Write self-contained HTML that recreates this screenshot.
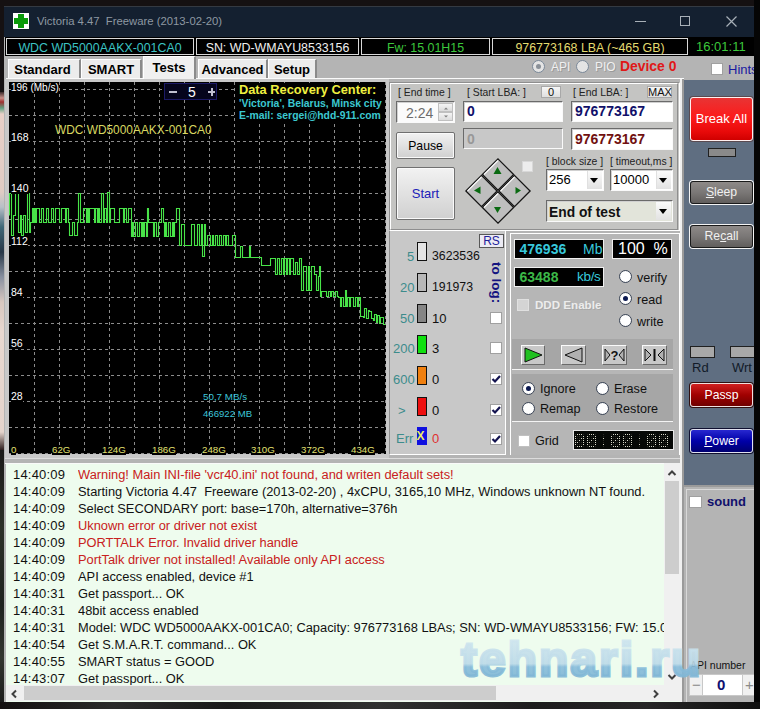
<!DOCTYPE html>
<html><head><meta charset="utf-8">
<style>
*{margin:0;padding:0;box-sizing:border-box}
html,body{width:760px;height:709px;overflow:hidden;background:#151112;font-family:"Liberation Sans",sans-serif;}
.a{position:absolute}
.t{position:absolute;white-space:nowrap;line-height:1}
.win{left:4px;top:6px;width:751px;height:696px;background:#b4b4b4;}
.title{left:4px;top:6px;width:750px;height:31px;background:#142030;border-top:1px solid #343a42}
.info{left:5px;top:37px;width:749px;height:19px;background:#000;}
.ibox{position:absolute;top:38px;height:17px;border:1px solid #d8d8d8;background:#000;font-size:12.4px;line-height:17px;padding-top:1px;text-align:center;}
.tab{position:absolute;top:59px;height:19px;background:#ececec;border-left:1px solid #fff;border-top:1px solid #fff;border-right:2px solid #8a8a8a;font-weight:bold;font-size:13px;line-height:19px;text-align:center;color:#000;}
.grp{position:absolute;border:1px solid #f4f4f4;box-shadow:inset 1px 1px 0 #8c8c8c, -1px -1px 0 #8c8c8c;}
.lbl{position:absolute;font-size:10.4px;color:#222;white-space:nowrap;line-height:1;margin-top:1px}
.edit{position:absolute;background:#fff;border-top:1px solid #6a6a6a;border-left:1px solid #6a6a6a;border-right:1px solid #fafafa;border-bottom:1px solid #fafafa;box-shadow:inset 1px 1px 0 #d0d0d0;}
.btn{position:absolute;background:linear-gradient(#f2f2f2,#d0d0d0);border:1px solid #707070;border-radius:2px;text-align:center;font-size:13px;color:#000;box-shadow:inset 0 0 0 1px #fafafa;}
.cb{position:absolute;width:12px;height:12px;background:#fff;border:1px solid #a0a0a0;}
.rb{position:absolute;width:13px;height:13px;border-radius:50%;background:radial-gradient(circle at 50% 50%,#fff 55%,#e4e4e4 100%);border:1.5px solid #3c4658;}
.rb.on::after{content:"";position:absolute;left:3px;top:3px;width:5px;height:5px;border-radius:50%;background:#0a1850;}
.log{font-size:13px;line-height:17px;white-space:nowrap;}
</style></head><body>
<!-- desktop bits -->
<div class="a" style="left:0;top:92px;width:5px;height:358px;background:linear-gradient(#3a2a2a 0px,#c89088 6px,#a03030 10px,#60a080 16px,#e8d0c8 22px,#e0ccc4 100px,#b8c0c8 115px,#406878 135px,#283848 160px,#8890a0 185px,#d8c8c0 210px,#e8d8d0 240px,#e4d4cc 340px,#302020 358px)"></div>

<div class="a" style="left:0;top:450px;width:4px;height:259px;background:linear-gradient(#1a1a18,#2c3028 30%,#1e221e 60%,#333630 80%,#181818)"></div>
<div class="a win"></div>
<div class="a title"></div>
<!-- icon -->
<div class="a" style="left:13px;top:13px;width:16px;height:16px;background:#fff"></div>
<div class="a" style="left:18px;top:14px;width:6px;height:14px;background:#0a9a0a"></div>
<div class="a" style="left:14px;top:18px;width:14px;height:6px;background:#0a9a0a"></div>
<div class="t" style="left:37px;top:16px;font-size:11.3px;color:#8e98a2">Victoria 4.47&nbsp; Freeware (2013-02-20)</div>
<!-- window controls -->
<div class="a" style="left:635px;top:21px;width:11px;height:1px;background:#a8b0b8"></div>
<div class="a" style="left:680px;top:16px;width:10px;height:10px;border:1px solid #a8b0b8"></div>
<svg class="a" style="left:726px;top:16px" width="11" height="11"><path d="M0.5 0.5L10.5 10.5M10.5 0.5L0.5 10.5" stroke="#a8b0b8" stroke-width="1.2"/></svg>

<!-- info strip -->
<div class="a info"></div>
<div class="ibox" style="left:6px;width:188px;color:#3cc4c4">WDC WD5000AAKX-001CA0</div>
<div class="ibox" style="left:196px;width:163px;color:#f0f0f0">SN: WD-WMAYU8533156</div>
<div class="ibox" style="left:361px;width:129px;color:#3cc83c">Fw: 15.01H15</div>
<div class="ibox" style="left:492px;width:196px;color:#e4dc70">976773168 LBA (~465 GB)</div>
<div class="t" style="left:696px;top:40px;font-size:13px;color:#3cc83c">16:01:11</div>

<!-- tabs -->
<div class="a" style="left:5px;top:56px;width:680px;height:3px;background:#b4b4b4"></div>
<div class="tab" style="left:8px;width:73px;padding-right:3px">Standard</div>
<div class="tab" style="left:81px;width:61px">SMART</div>
<div class="tab" style="left:143px;top:56px;height:24px;width:53px;background:#f0f0f0;line-height:22px">Tests</div>
<div class="tab" style="left:198px;width:70px">Advanced</div>
<div class="tab" style="left:268px;width:49px">Setup</div>
<div class="a" style="left:6px;top:78px;width:137px;height:1px;background:#fafafa"></div>
<div class="a" style="left:196px;top:78px;width:488px;height:1px;background:#fafafa"></div>

<!-- API/PIO/Device -->
<div class="rb" style="left:532px;top:60px;background:#e4e4e4;border-color:#7a8898"><div class="a" style="left:3px;top:3px;width:5px;height:5px;border-radius:50%;background:#8a9098"></div></div>
<div class="t" style="left:551px;top:61px;font-size:12px;color:#f0f0f0;text-shadow:1px 1px 0 #9a9a9a">API</div>
<div class="rb" style="left:576px;top:60px;background:#e4e4e4;border-color:#7a8898"></div>
<div class="t" style="left:595px;top:61px;font-size:12px;color:#f0f0f0;text-shadow:1px 1px 0 #9a9a9a">PIO</div>
<div class="t" style="left:620px;top:60px;font-size:13.9px;font-weight:bold;color:#e01818">Device 0</div>
<div class="cb" style="left:711px;top:63px"></div>
<div class="t" style="left:728px;top:63px;font-size:13px;color:#1a1aa0">Hints</div>

<!-- chart -->
<div class="a" style="left:5px;top:79px;width:384px;height:379px;background:#c8c8c8"></div>
<div class="a" style="left:9px;top:82px;width:377px;height:372px;background:#000"></div>
<svg class="a" style="left:0;top:0" width="400" height="460">
 <g stroke="#8c8c8c" stroke-width="1" stroke-dasharray="3,3" fill="none">
  <path d="M34.5 82V454M59.5 82V454M84.5 82V454M109.5 82V454M134.5 82V454M159.5 82V454M184.5 82V454M209.5 82V454M234.5 82V454M259.5 82V454M284.5 82V454M309.5 82V454M334.5 82V454M359.5 82V454M385.5 82V454"/>
  <path d="M9 89.5H386M9 115.5H386M9 141.5H386M9 167.5H386M9 193.5H386M9 219.5H386M9 245.5H386M9 271.5H386M9 297.5H386M9 323.5H386M9 349.5H386M9 375.5H386M9 401.5H386M9 427.5H386M9 453.5H386"/>
 </g>
 <polyline fill="none" stroke="#48e448" stroke-width="1.1" points="9.5,215.5 9.5,193.5 11.5,193.5 11.5,235.5 13.5,235.5 13.5,215.5 15.5,215.5 15.5,193.5 18.5,193.5 18.5,232.5 20.5,232.5 20.5,215.5 21.5,215.5 21.5,235.5 23.5,235.5 23.5,215.5 25.5,215.5 25.5,232.5 26.5,232.5 26.5,232.5 27.5,232.5 27.5,193.5 29.5,193.5 29.5,232.5 30.5,232.5 30.5,222.5 32.5,222.5 32.5,208.5 33.5,208.5 33.5,222.5 34.5,222.5 34.5,208.5 35.5,208.5 35.5,222.5 36.5,222.5 36.5,208.5 39.5,208.5 39.5,222.5 41.5,222.5 41.5,208.5 43.5,208.5 43.5,222.5 45.5,222.5 45.5,222.5 46.5,222.5 46.5,208.5 48.5,208.5 48.5,222.5 50.5,222.5 50.5,222.5 51.5,222.5 51.5,208.5 53.5,208.5 53.5,222.5 55.5,222.5 55.5,208.5 57.5,208.5 57.5,208.5 59.5,208.5 59.5,222.5 61.5,222.5 61.5,208.5 63.5,208.5 63.5,208.5 65.5,208.5 65.5,222.5 66.5,222.5 66.5,208.5 68.5,208.5 68.5,222.5 69.5,222.5 69.5,235.5 72.5,235.5 72.5,222.5 74.5,222.5 74.5,235.5 77.5,235.5 77.5,222.5 78.5,222.5 78.5,193.5 80.5,193.5 80.5,222.5 82.5,222.5 82.5,222.5 83.5,222.5 83.5,208.5 84.5,208.5 84.5,208.5 86.5,208.5 86.5,222.5 87.5,222.5 87.5,208.5 88.5,208.5 88.5,222.5 89.5,222.5 89.5,208.5 91.5,208.5 91.5,208.5 94.5,208.5 94.5,222.5 95.5,222.5 95.5,208.5 97.5,208.5 97.5,222.5 98.5,222.5 98.5,208.5 99.5,208.5 99.5,222.5 101.5,222.5 101.5,193.5 103.5,193.5 103.5,222.5 104.5,222.5 104.5,208.5 106.5,208.5 106.5,222.5 107.5,222.5 107.5,192.5 109.5,192.5 109.5,222.5 110.5,222.5 110.5,208.5 112.5,208.5 112.5,208.5 114.5,208.5 114.5,222.5 115.5,222.5 115.5,222.5 117.5,222.5 117.5,222.5 119.5,222.5 119.5,208.5 121.5,208.5 121.5,208.5 123.5,208.5 123.5,222.5 124.5,222.5 124.5,208.5 126.5,208.5 126.5,222.5 128.5,222.5 128.5,208.5 131.5,208.5 131.5,236.5 132.5,236.5 132.5,222.5 133.5,222.5 133.5,236.5 134.5,236.5 134.5,236.5 135.5,236.5 135.5,222.5 137.5,222.5 137.5,236.5 139.5,236.5 139.5,222.5 141.5,222.5 141.5,236.5 142.5,236.5 142.5,222.5 143.5,222.5 143.5,236.5 144.5,236.5 144.5,222.5 146.5,222.5 146.5,236.5 147.5,236.5 147.5,208.5 148.5,208.5 148.5,222.5 151.5,222.5 151.5,222.5 153.5,222.5 153.5,236.5 154.5,236.5 154.5,222.5 156.5,222.5 156.5,236.5 158.5,236.5 158.5,222.5 161.5,222.5 161.5,208.5 163.5,208.5 163.5,222.5 164.5,222.5 164.5,236.5 165.5,236.5 165.5,222.5 166.5,222.5 166.5,236.5 168.5,236.5 168.5,222.5 170.5,222.5 170.5,236.5 172.5,236.5 172.5,222.5 173.5,222.5 173.5,236.5 174.5,236.5 174.5,222.5 176.5,222.5 176.5,208.5 179.5,208.5 179.5,245.5 181.5,245.5 181.5,224.5 184.5,224.5 184.5,245.5 186.5,245.5 186.5,245.5 189.5,245.5 189.5,245.5 191.5,245.5 191.5,224.5 194.5,224.5 194.5,245.5 196.5,245.5 196.5,245.5 197.5,245.5 197.5,224.5 199.5,224.5 199.5,245.5 201.5,245.5 201.5,224.5 202.5,224.5 202.5,256.5 204.5,256.5 204.5,224.5 205.5,224.5 205.5,245.5 207.5,245.5 207.5,235.5 210.5,235.5 210.5,245.5 212.5,245.5 212.5,235.5 213.5,235.5 213.5,245.5 215.5,245.5 215.5,235.5 217.5,235.5 217.5,245.5 219.5,245.5 219.5,235.5 221.5,235.5 221.5,245.5 223.5,245.5 223.5,235.5 225.5,235.5 225.5,245.5 226.5,245.5 226.5,235.5 228.5,235.5 228.5,245.5 230.5,245.5 230.5,245.5 232.5,245.5 232.5,235.5 235.5,235.5 235.5,257.5 238.5,257.5 238.5,257.5 240.5,257.5 240.5,246.5 242.5,246.5 242.5,257.5 245.5,257.5 245.5,257.5 248.5,257.5 248.5,257.5 249.5,257.5 249.5,246.5 250.5,246.5 250.5,257.5 252.5,257.5 252.5,257.5 253.5,257.5 253.5,257.5 254.5,257.5 254.5,257.5 257.5,257.5 257.5,257.5 259.5,257.5 259.5,257.5 261.5,257.5 261.5,265.5 263.5,265.5 263.5,265.5 265.5,265.5 265.5,265.5 267.5,265.5 267.5,265.5 268.5,265.5 268.5,265.5 270.5,265.5 270.5,258.5 272.5,258.5 272.5,258.5 275.5,258.5 275.5,274.5 277.5,274.5 277.5,258.5 279.5,258.5 279.5,274.5 281.5,274.5 281.5,258.5 283.5,258.5 283.5,274.5 284.5,274.5 284.5,258.5 286.5,258.5 286.5,274.5 287.5,274.5 287.5,258.5 289.5,258.5 289.5,274.5 290.5,274.5 290.5,258.5 293.5,258.5 293.5,274.5 295.5,274.5 295.5,262.5 297.5,262.5 297.5,274.5 298.5,274.5 298.5,274.5 299.5,274.5 299.5,258.5 301.5,258.5 301.5,290.5 302.5,290.5 302.5,290.5 303.5,290.5 303.5,266.5 306.5,266.5 306.5,290.5 308.5,290.5 308.5,266.5 309.5,266.5 309.5,290.5 311.5,290.5 311.5,266.5 314.5,266.5 314.5,274.5 316.5,274.5 316.5,290.5 318.5,290.5 318.5,276.5 319.5,276.5 319.5,266.5 320.5,266.5 320.5,296.5 321.5,296.5 321.5,291.5 323.5,291.5 323.5,291.5 326.5,291.5 326.5,296.5 328.5,296.5 328.5,291.5 330.5,291.5 330.5,296.5 331.5,296.5 331.5,291.5 333.5,291.5 333.5,296.5 334.5,296.5 334.5,296.5 335.5,296.5 335.5,291.5 337.5,291.5 337.5,296.5 338.5,296.5 338.5,297.5 340.5,297.5 340.5,306.5 341.5,306.5 341.5,297.5 343.5,297.5 343.5,306.5 345.5,306.5 345.5,290.5 346.5,290.5 346.5,306.5 347.5,306.5 347.5,297.5 349.5,297.5 349.5,306.5 350.5,306.5 350.5,297.5 353.5,297.5 353.5,306.5 354.5,306.5 354.5,306.5 355.5,306.5 355.5,297.5 357.5,297.5 357.5,306.5 358.5,306.5 358.5,297.5 360.5,297.5 360.5,316.5 361.5,316.5 361.5,316.5 363.5,316.5 363.5,317.5 364.5,317.5 364.5,308.5 366.5,308.5 366.5,318.5 368.5,318.5 368.5,310.5 369.5,310.5 369.5,311.5 371.5,311.5 371.5,318.5 373.5,318.5 373.5,320.5 374.5,320.5 374.5,314.5 376.5,314.5 376.5,322.5 377.5,322.5 377.5,315.5 379.5,315.5 379.5,323.5 380.5,323.5 380.5,317.5 383.5,317.5 383.5,324.5 385.5,324.5"/>
</svg>
<div class="t" style="left:11px;top:83px;font-size:10px;color:#fff;background:#000">196 (Mb/s)</div>
<div class="t" style="left:11px;top:132px;font-size:10.5px;color:#fff;background:#000">168</div>
<div class="t" style="left:11px;top:183px;font-size:10.5px;color:#fff;background:#000">140</div>
<div class="t" style="left:11px;top:236px;font-size:10.5px;color:#fff;background:#000">112</div>
<div class="t" style="left:11px;top:287px;font-size:10.5px;color:#fff;background:#000">84</div>
<div class="t" style="left:11px;top:338px;font-size:10.5px;color:#fff;background:#000">56</div>
<div class="t" style="left:11px;top:391px;font-size:10.5px;color:#fff;background:#000">28</div>
<div class="t" style="left:11px;top:445px;font-size:9.7px;color:#e0e070;background:#000">0</div>
<div class="t" style="left:52px;top:445px;font-size:9.7px;color:#e0e070;background:#000">62G</div>
<div class="t" style="left:102px;top:445px;font-size:9.7px;color:#e0e070;background:#000">124G</div>
<div class="t" style="left:152px;top:445px;font-size:9.7px;color:#e0e070;background:#000">186G</div>
<div class="t" style="left:202px;top:445px;font-size:9.7px;color:#e0e070;background:#000">248G</div>
<div class="t" style="left:251px;top:445px;font-size:9.7px;color:#e0e070;background:#000">310G</div>
<div class="t" style="left:301px;top:445px;font-size:9.7px;color:#e0e070;background:#000">372G</div>
<div class="t" style="left:351px;top:445px;font-size:9.7px;color:#e0e070;background:#000">434G</div>
<div class="t" style="left:55px;top:125px;font-size:11.9px;color:#d8d860">WDC WD5000AAKX-001CA0</div>
<div class="t" style="left:203px;top:392px;font-size:9.8px;color:#3cc4d8">50,7 MB/s</div>
<div class="t" style="left:203px;top:409px;font-size:9.6px;color:#3cc4d8">466922 MB</div>
<!-- spinner - 5 + -->
<div class="a" style="left:164px;top:83px;width:53px;height:17px;background:#05051c;border:1px solid #1c1a66"></div>
<div class="a" style="left:169px;top:91px;width:8px;height:2px;background:#c0c0d0"></div>
<div class="t" style="left:188px;top:85px;font-size:14px;color:#fff">5</div>
<div class="a" style="left:208px;top:91px;width:7px;height:2px;background:#c0c0d0"></div>
<div class="a" style="left:210.5px;top:88px;width:2px;height:8px;background:#c0c0d0"></div>
<div class="a" style="left:237px;top:83px;width:148px;height:40px;background:#000"></div>
<div class="t" style="left:239px;top:84px;font-size:12.8px;font-weight:bold;color:#f0f040">Data Recovery Center:</div>
<div class="t" style="left:239px;top:99px;font-size:10.4px;font-weight:bold;color:#3cc8d0">'Victoria', Belarus, Minsk city</div>
<div class="t" style="left:239px;top:111px;font-size:10.4px;font-weight:bold;color:#3cc8d0">E-mail: sergei@hdd-911.com</div>

<!-- separator under chart -->
<div class="a" style="left:5px;top:458px;width:677px;height:6px;background:#b4b4b4;border-top:1px solid #dcdcdc;border-bottom:1px solid #fafafa"></div>

<!-- log -->
<div class="a" style="left:6px;top:464px;width:676px;height:238px;background:#eefcee"></div>
<div class="a log" style="left:13px;top:466px;color:#111;letter-spacing:0.2px">
14:40:09<br>14:40:09<br>14:40:09<br>14:40:09<br>14:40:09<br>14:40:09<br>14:40:09<br>14:40:31<br>14:40:31<br>14:40:31<br>14:40:54<br>14:40:55<br>14:43:07
</div>
<div class="a log" style="left:78px;top:466px;color:#111;width:586px;overflow:hidden;font-size:12.85px">
<span style="color:#c82020">Warning! Main INI-file 'vcr40.ini' not found, and writen default sets!</span><br>
Starting Victoria 4.47&nbsp; Freeware (2013-02-20) , 4xCPU, 3165,10 MHz, Windows unknown NT found.<br>
Select SECONDARY port: base=170h, alternative=376h<br>
<span style="color:#c82020">Uknown error or driver not exist</span><br>
<span style="color:#c82020">PORTTALK Error. Invalid driver handle</span><br>
<span style="color:#c82020">PortTalk driver not installed! Available only API access</span><br>
API access enabled, device #1<br>
Get passport... OK<br>
48bit access enabled<br>
Model: WDC WD5000AAKX-001CA0; Capacity: 976773168 LBAs; SN: WD-WMAYU8533156; FW: 15.01<br>
Get S.M.A.R.T. command... OK<br>
SMART status = GOOD<br>
Get passport... OK
</div>
<!-- log scrollbars -->
<div class="a" style="left:664px;top:463px;width:16px;height:222px;background:#f0f0f0"></div>
<div class="a" style="left:665px;top:481px;width:14px;height:93px;background:#cdcdcd"></div>
<svg class="a" style="left:666px;top:469px" width="12" height="8"><path d="M2.5 6L6 2.5L9.5 6" stroke="#404040" stroke-width="2" fill="none"/></svg>
<svg class="a" style="left:666px;top:673px" width="12" height="8"><path d="M2.5 2L6 5.5L9.5 2" stroke="#404040" stroke-width="2" fill="none"/></svg>
<div class="a" style="left:6px;top:685px;width:674px;height:16px;background:#f0f0f0"></div>
<div class="a" style="left:24px;top:686px;width:472px;height:14px;background:#cdcdcd"></div>
<svg class="a" style="left:10px;top:688px" width="8" height="12"><path d="M6 2.5L2.5 6L6 9.5" stroke="#404040" stroke-width="2" fill="none"/></svg>
<svg class="a" style="left:652px;top:688px" width="8" height="12"><path d="M2 2.5L5.5 6L2 9.5" stroke="#404040" stroke-width="2" fill="none"/></svg>



<!-- ===== GROUP 1 ===== -->
<div class="a" style="left:389px;top:82px;width:291px;height:149px;background:#c4c4c2;border-top:1px solid #8e8e8e;border-left:1px solid #8e8e8e;border-right:1px solid #fff;border-bottom:1px solid #fff"></div>
<div class="a" style="left:390px;top:83px;width:288px;height:147px;border-top:1px solid #fff;border-left:1px solid #fff;border-right:1px solid #8e8e8e;border-bottom:1px solid #8e8e8e"></div>
<div class="lbl" style="left:398px;top:87px">[ End time ]</div>
<div class="edit" style="left:396px;top:101px;width:59px;height:22px;background:#fbfbfb"></div>
<div class="t" style="left:406px;top:106px;font-size:14px;color:#6c6c6c">2:24</div>
<div class="a" style="left:438px;top:103px;width:15px;height:9px;background:linear-gradient(#f4f4f4,#dcdcdc);border:1px solid #c0c0c0"></div>
<div class="a" style="left:438px;top:112px;width:15px;height:9px;background:linear-gradient(#f4f4f4,#dcdcdc);border:1px solid #c0c0c0"></div>
<svg class="a" style="left:438px;top:103px" width="16" height="18"><path d="M6 6.5L8 4.5L10 6.5Z" fill="#808080"/><path d="M6 12.5L8 14.5L10 12.5Z" fill="#808080"/></svg>

<div class="btn" style="left:396px;top:132px;width:59px;height:27px;line-height:27px;font-size:12.2px">Pause</div>
<div class="btn" style="left:396px;top:167px;width:59px;height:53px;line-height:51px;color:#2020b8">Start</div>
<div class="lbl" style="left:467px;top:87px">[ Start LBA: ]</div>
<div class="a" style="left:541px;top:86px;width:20px;height:12px;background:linear-gradient(#f6f6f6,#e0e0e0);border:1px solid #a8a8a8;font-size:11px;line-height:10px;text-align:center;color:#111">0</div>
<div class="edit" style="left:463px;top:101px;width:100px;height:21px"></div>
<div class="t" style="left:467px;top:104px;font-size:14px;font-weight:bold;color:#10106a">0</div>
<div class="edit" style="left:463px;top:128px;width:100px;height:21px;background:#c8c8c8;box-shadow:none"></div>
<div class="t" style="left:467px;top:132px;font-size:14px;font-weight:bold;color:#989898">0</div>
<div class="lbl" style="left:573px;top:87px">[ End LBA: ]</div>
<div class="a" style="left:647px;top:86px;width:25px;height:12px;background:linear-gradient(#f6f6f6,#e0e0e0);border:1px solid #a8a8a8;font-size:11px;line-height:10px;text-align:center;color:#111">MAX</div>
<div class="edit" style="left:571px;top:101px;width:102px;height:21px"></div>
<div class="t" style="left:575px;top:104px;font-size:14px;font-weight:bold;color:#10106a">976773167</div>
<div class="edit" style="left:571px;top:128px;width:102px;height:22px"></div>
<div class="t" style="left:575px;top:132px;font-size:14px;font-weight:bold;color:#701010">976773167</div>
<!-- diamond -->
<svg class="a" style="left:460px;top:153px" width="76" height="76" viewBox="460 153 76 76">
 <g stroke="#151515" stroke-width="1.3" fill="#bebebe"><path d="M498 158.9L513.6 174.5L498 190.1L482.4 174.5Z"/><path d="M481.5 175.4L497.1 191L481.5 206.6L465.9 191Z"/><path d="M514.5 175.4L530.1 191L514.5 206.6L498.9 191Z"/><path d="M498 191.9L513.6 207.5L498 223.1L482.4 207.5Z"/></g>
 <g stroke="#fafafa" stroke-width="1.1" fill="none"><path d="M484.0 174.5L498 160.5"/><path d="M467.5 191L481.5 177.0"/><path d="M500.5 191L514.5 177.0"/><path d="M484.0 207.5L498 193.5"/></g>
 <g fill="#0a6a12"><path d="M497.5 167L501.5 174H493.5Z"/><path d="M474 190.5L480.5 186.5V194Z"/><path d="M521 190.5L515.5 187V194Z"/><path d="M497.5 213L501 207H494Z"/></g>
</svg>
<div class="a" style="left:522px;top:161px;width:11px;height:11px;background:#ededed;border:1px solid #d8d8d8"></div>
<div class="lbl" style="left:546px;top:156px">[ block size ]</div>
<div class="lbl" style="left:610px;top:156px">[ timeout,ms ]</div>
<div class="edit" style="left:546px;top:169px;width:58px;height:22px"></div>
<div class="t" style="left:549px;top:173px;font-size:13px;color:#000">256</div>
<div class="a" style="left:587px;top:171px;width:15px;height:18px;background:linear-gradient(#fbfbfb,#e2e2e2);border-left:1px solid #e0e0e0"></div>
<div class="a" style="left:590px;top:178px;width:0;height:0;border-left:4px solid transparent;border-right:4px solid transparent;border-top:5px solid #000"></div>
<div class="edit" style="left:610px;top:169px;width:63px;height:22px"></div>
<div class="t" style="left:613px;top:173px;font-size:13px;color:#000">10000</div>
<div class="a" style="left:656px;top:171px;width:15px;height:18px;background:linear-gradient(#fbfbfb,#e2e2e2);border-left:1px solid #e0e0e0"></div>
<div class="a" style="left:659px;top:178px;width:0;height:0;border-left:4px solid transparent;border-right:4px solid transparent;border-top:5px solid #000"></div>
<div class="edit" style="left:546px;top:200px;width:127px;height:22px;background:#e2e4da"></div>
<div class="t" style="left:549px;top:205.5px;font-size:13.8px;font-weight:bold;color:#111">End of test</div>
<div class="a" style="left:656px;top:202px;width:15px;height:18px;background:linear-gradient(#fbfbfb,#e2e2e2)"></div>
<div class="a" style="left:659px;top:209px;width:0;height:0;border-left:4px solid transparent;border-right:4px solid transparent;border-top:5px solid #000"></div>

<!-- ===== GROUP 2 (block counts) ===== -->
<div class="a" style="left:389px;top:231px;width:117px;height:224px;background:#c8c8c8;border-right:1px solid #fff;border-bottom:1px solid #fff;border-left:1px solid #8e8e8e"></div>
<div class="a" style="left:479px;top:234px;width:25px;height:14px;background:#ecebf4;border:1px solid #585858;font-size:12px;line-height:12px;text-align:center;color:#22229a">RS</div>
<div class="t" style="left:491px;top:262px;font-size:13.5px;font-weight:bold;color:#141480;transform:rotate(90deg);transform-origin:0 0;margin-left:12px">to log:</div>
<div class="t" style="left:407px;top:250px;font-size:13px;color:#3c8c8c">5</div>
<div class="a" style="left:417px;top:242px;width:10px;height:19px;background:#e4e4e4;border:1px solid #111"></div>
<div class="t" style="left:432px;top:250px;font-size:12.3px;color:#111">3623536</div>
<div class="t" style="left:400px;top:281px;font-size:13px;color:#3c8c8c">20</div>
<div class="a" style="left:417px;top:273px;width:10px;height:19px;background:#b8b8b8;border:1px solid #111"></div>
<div class="t" style="left:432px;top:281px;font-size:12.3px;color:#111">191973</div>
<div class="t" style="left:400px;top:312px;font-size:13px;color:#3c8c8c">50</div>
<div class="a" style="left:417px;top:304px;width:10px;height:19px;background:#858585;border:1px solid #111"></div>
<div class="t" style="left:432px;top:312px;font-size:13px;color:#111">10</div>
<div class="t" style="left:393px;top:341.5px;font-size:13px;color:#3c8c8c">200</div>
<div class="a" style="left:417px;top:335px;width:10px;height:19px;background:#10e010;border:1px solid #111"></div>
<div class="t" style="left:432px;top:341.5px;font-size:13px;color:#111">3</div>
<div class="t" style="left:393px;top:372.5px;font-size:13px;color:#3c8c8c">600</div>
<div class="a" style="left:417px;top:366px;width:10px;height:19px;background:#f08010;border:1px solid #111"></div>
<div class="t" style="left:432px;top:372.5px;font-size:13px;color:#111">0</div>
<div class="t" style="left:398px;top:403.5px;font-size:13px;color:#3c8c8c">&gt;</div>
<div class="a" style="left:417px;top:397px;width:10px;height:19px;background:#ee1010;border:1px solid #111"></div>
<div class="t" style="left:432px;top:403.5px;font-size:13px;color:#111">0</div>
<div class="t" style="left:396px;top:432px;font-size:13px;color:#3c8c8c">Err</div>
<div class="a" style="left:417px;top:427px;width:10px;height:18px;background:#1010e0"></div>
<div class="t" style="left:416.5px;top:430px;font-size:12px;font-weight:bold;color:#f0f060">X</div>
<div class="t" style="left:432px;top:432px;font-size:13px;color:#e03030">0</div>
<div class="cb" style="left:490px;top:312px"></div>
<div class="cb" style="left:490px;top:342px"></div>
<div class="cb" style="left:490px;top:373px"></div>
<div class="cb" style="left:490px;top:404px"></div>
<div class="cb" style="left:490px;top:433px"></div>

<svg class="a" style="left:490px;top:373px" width="12" height="12"><path d="M2.5 6L5 8.5L10 3" stroke="#141450" stroke-width="2.2" fill="none"/></svg><svg class="a" style="left:490px;top:404px" width="12" height="12"><path d="M2.5 6L5 8.5L10 3" stroke="#141450" stroke-width="2.2" fill="none"/></svg><svg class="a" style="left:490px;top:433px" width="12" height="12"><path d="M2.5 6L5 8.5L10 3" stroke="#141450" stroke-width="2.2" fill="none"/></svg>
<!-- ===== GROUP 3 ===== -->
<div class="a" style="left:510px;top:233px;width:170px;height:222px;background:#b6b6b6;border-left:1px solid #fff;border-top:1px solid #fff;border-right:1px solid #fff"></div>
<div class="a" style="left:514px;top:239px;width:90px;height:20px;background:#000;border:1px solid #f0f0f0"></div>
<div class="t" style="left:519.5px;top:242px;font-size:14px;font-weight:bold;color:#38c8dc">476936</div>
<div class="t" style="left:583px;top:242px;font-size:14px;color:#38c8dc">Mb</div>
<div class="a" style="left:612px;top:239px;width:60px;height:20px;background:#000;border:1px solid #f0f0f0"></div>
<div class="t" style="left:618px;top:241px;font-size:16px;color:#fff">100&nbsp; %</div>
<div class="a" style="left:514px;top:267px;width:90px;height:20px;background:#000;border:1px solid #f0f0f0"></div>
<div class="t" style="left:519.5px;top:270px;font-size:14px;font-weight:bold;color:#3cb848">63488</div>
<div class="t" style="left:577px;top:270px;font-size:13.5px;color:#38c8dc;letter-spacing:-0.3px">kb/s</div>
<div class="a" style="left:517px;top:299px;width:12px;height:12px;background:#d4d4d4;border:1px solid #e0e0e0"></div>
<div class="t" style="left:535px;top:299px;font-size:11.6px;font-weight:bold;color:#ececec;text-shadow:1px 1px 0 #a8a8a8">DDD Enable</div>
<div class="rb" style="left:619px;top:270px"></div>
<div class="t" style="left:637px;top:272px;font-size:12.6px;color:#111">verify</div>
<div class="rb on" style="left:619px;top:292px"></div>
<div class="t" style="left:637px;top:294px;font-size:12.6px;color:#111">read</div>
<div class="rb" style="left:619px;top:314px"></div>
<div class="t" style="left:637px;top:316px;font-size:12.6px;color:#111">write</div>
<!-- player strip -->
<div class="a" style="left:512px;top:339px;width:161px;height:31px;background:#a6a6a6;border-bottom:1px solid #f4f4f4"></div>
<div class="a" style="left:521px;top:345px;width:24px;height:20px;background:#c8c8c8;border-top:1px solid #fafafa;border-left:1px solid #fafafa;border-right:1px solid #6a6a6a;border-bottom:1px solid #6a6a6a"></div>
<svg class="a" style="left:521px;top:345px" width="25" height="20"><path d="M4 3L21 10L4 17Z" fill="#20c020" stroke="#111" stroke-width="1"/></svg>
<div class="a" style="left:561px;top:345px;width:25px;height:20px;background:#c8c8c8;border-top:1px solid #fafafa;border-left:1px solid #fafafa;border-right:1px solid #6a6a6a;border-bottom:1px solid #6a6a6a"></div>
<svg class="a" style="left:561px;top:345px" width="25" height="20"><path d="M21 3L4 10L21 17Z" fill="#b0b0b0" stroke="#111" stroke-width="1"/></svg>
<div class="a" style="left:602px;top:345px;width:25px;height:20px;background:#c8c8c8;border-top:1px solid #fafafa;border-left:1px solid #fafafa;border-right:1px solid #6a6a6a;border-bottom:1px solid #6a6a6a"></div>
<svg class="a" style="left:602px;top:345px" width="25" height="20"><path d="M3 4L8 10L3 16Z M22 4L17 10L22 16Z" fill="#b0b0b0" stroke="#111" stroke-width="1"/><text x="12.5" y="15" font-family="Liberation Sans" font-weight="bold" font-size="13" text-anchor="middle" fill="#111">?</text></svg>
<div class="a" style="left:642px;top:345px;width:25px;height:20px;background:#c8c8c8;border-top:1px solid #fafafa;border-left:1px solid #fafafa;border-right:1px solid #6a6a6a;border-bottom:1px solid #6a6a6a"></div>
<svg class="a" style="left:642px;top:345px" width="25" height="20"><path d="M3 4L9 10L3 16Z M22 4L16 10L22 16Z" fill="#b0b0b0" stroke="#111" stroke-width="1"/><path d="M12.5 4V16" stroke="#111" stroke-width="2"/></svg>
<!-- radio strip -->
<div class="a" style="left:512px;top:374px;width:161px;height:48px;background:#a6a6a6;border-bottom:1px solid #f4f4f4"></div>
<div class="rb on" style="left:522px;top:382px"></div>
<div class="t" style="left:540px;top:383px;font-size:12.6px;color:#111">Ignore</div>
<div class="rb" style="left:522px;top:402px"></div>
<div class="t" style="left:540px;top:403px;font-size:12.6px;color:#111">Remap</div>
<div class="rb" style="left:596px;top:382px"></div>
<div class="t" style="left:614px;top:383px;font-size:12.6px;color:#111">Erase</div>
<div class="rb" style="left:596px;top:402px"></div>
<div class="t" style="left:614px;top:403px;font-size:12.6px;color:#111">Restore</div>
<!-- grid + lcd -->
<div class="cb" style="left:518px;top:435px;background:#fff;border-color:#c0c0c0"></div>
<div class="t" style="left:535px;top:435px;font-size:12.6px;color:#111">Grid</div>
<div class="a" style="left:573px;top:430px;width:101px;height:20px;background:#060806;border:1px solid #e8e8e8"></div>
<svg class="a" style="left:0;top:0" width="700" height="460"><g fill="#d8d8c8"><rect x="577" y="434" width="1" height="1"/><rect x="579" y="434" width="1" height="1"/><rect x="581" y="434" width="1" height="1"/><rect x="575" y="436" width="1" height="1"/><rect x="583" y="436" width="1" height="1"/><rect x="575" y="438" width="1" height="1"/><rect x="581" y="438" width="1" height="1"/><rect x="583" y="438" width="1" height="1"/><rect x="575" y="440" width="1" height="1"/><rect x="579" y="440" width="1" height="1"/><rect x="583" y="440" width="1" height="1"/><rect x="575" y="442" width="1" height="1"/><rect x="577" y="442" width="1" height="1"/><rect x="583" y="442" width="1" height="1"/><rect x="575" y="444" width="1" height="1"/><rect x="583" y="444" width="1" height="1"/><rect x="577" y="446" width="1" height="1"/><rect x="579" y="446" width="1" height="1"/><rect x="581" y="446" width="1" height="1"/><rect x="589" y="434" width="1" height="1"/><rect x="591" y="434" width="1" height="1"/><rect x="593" y="434" width="1" height="1"/><rect x="587" y="436" width="1" height="1"/><rect x="595" y="436" width="1" height="1"/><rect x="587" y="438" width="1" height="1"/><rect x="593" y="438" width="1" height="1"/><rect x="595" y="438" width="1" height="1"/><rect x="587" y="440" width="1" height="1"/><rect x="591" y="440" width="1" height="1"/><rect x="595" y="440" width="1" height="1"/><rect x="587" y="442" width="1" height="1"/><rect x="589" y="442" width="1" height="1"/><rect x="595" y="442" width="1" height="1"/><rect x="587" y="444" width="1" height="1"/><rect x="595" y="444" width="1" height="1"/><rect x="589" y="446" width="1" height="1"/><rect x="591" y="446" width="1" height="1"/><rect x="593" y="446" width="1" height="1"/><rect x="613" y="434" width="1" height="1"/><rect x="615" y="434" width="1" height="1"/><rect x="617" y="434" width="1" height="1"/><rect x="611" y="436" width="1" height="1"/><rect x="619" y="436" width="1" height="1"/><rect x="611" y="438" width="1" height="1"/><rect x="617" y="438" width="1" height="1"/><rect x="619" y="438" width="1" height="1"/><rect x="611" y="440" width="1" height="1"/><rect x="615" y="440" width="1" height="1"/><rect x="619" y="440" width="1" height="1"/><rect x="611" y="442" width="1" height="1"/><rect x="613" y="442" width="1" height="1"/><rect x="619" y="442" width="1" height="1"/><rect x="611" y="444" width="1" height="1"/><rect x="619" y="444" width="1" height="1"/><rect x="613" y="446" width="1" height="1"/><rect x="615" y="446" width="1" height="1"/><rect x="617" y="446" width="1" height="1"/><rect x="625" y="434" width="1" height="1"/><rect x="627" y="434" width="1" height="1"/><rect x="629" y="434" width="1" height="1"/><rect x="623" y="436" width="1" height="1"/><rect x="631" y="436" width="1" height="1"/><rect x="623" y="438" width="1" height="1"/><rect x="629" y="438" width="1" height="1"/><rect x="631" y="438" width="1" height="1"/><rect x="623" y="440" width="1" height="1"/><rect x="627" y="440" width="1" height="1"/><rect x="631" y="440" width="1" height="1"/><rect x="623" y="442" width="1" height="1"/><rect x="625" y="442" width="1" height="1"/><rect x="631" y="442" width="1" height="1"/><rect x="623" y="444" width="1" height="1"/><rect x="631" y="444" width="1" height="1"/><rect x="625" y="446" width="1" height="1"/><rect x="627" y="446" width="1" height="1"/><rect x="629" y="446" width="1" height="1"/><rect x="649" y="434" width="1" height="1"/><rect x="651" y="434" width="1" height="1"/><rect x="653" y="434" width="1" height="1"/><rect x="647" y="436" width="1" height="1"/><rect x="655" y="436" width="1" height="1"/><rect x="647" y="438" width="1" height="1"/><rect x="653" y="438" width="1" height="1"/><rect x="655" y="438" width="1" height="1"/><rect x="647" y="440" width="1" height="1"/><rect x="651" y="440" width="1" height="1"/><rect x="655" y="440" width="1" height="1"/><rect x="647" y="442" width="1" height="1"/><rect x="649" y="442" width="1" height="1"/><rect x="655" y="442" width="1" height="1"/><rect x="647" y="444" width="1" height="1"/><rect x="655" y="444" width="1" height="1"/><rect x="649" y="446" width="1" height="1"/><rect x="651" y="446" width="1" height="1"/><rect x="653" y="446" width="1" height="1"/><rect x="661" y="434" width="1" height="1"/><rect x="663" y="434" width="1" height="1"/><rect x="665" y="434" width="1" height="1"/><rect x="659" y="436" width="1" height="1"/><rect x="667" y="436" width="1" height="1"/><rect x="659" y="438" width="1" height="1"/><rect x="665" y="438" width="1" height="1"/><rect x="667" y="438" width="1" height="1"/><rect x="659" y="440" width="1" height="1"/><rect x="663" y="440" width="1" height="1"/><rect x="667" y="440" width="1" height="1"/><rect x="659" y="442" width="1" height="1"/><rect x="661" y="442" width="1" height="1"/><rect x="667" y="442" width="1" height="1"/><rect x="659" y="444" width="1" height="1"/><rect x="667" y="444" width="1" height="1"/><rect x="661" y="446" width="1" height="1"/><rect x="663" y="446" width="1" height="1"/><rect x="665" y="446" width="1" height="1"/><rect x="603" y="438" width="1" height="1"/><rect x="603" y="444" width="1" height="1"/><rect x="639" y="438" width="1" height="1"/><rect x="639" y="444" width="1" height="1"/></g><g fill="#2a2a24"><rect x="575" y="434" width="1" height="1"/><rect x="583" y="434" width="1" height="1"/><rect x="577" y="436" width="1" height="1"/><rect x="579" y="436" width="1" height="1"/><rect x="581" y="436" width="1" height="1"/><rect x="577" y="438" width="1" height="1"/><rect x="579" y="438" width="1" height="1"/><rect x="577" y="440" width="1" height="1"/><rect x="581" y="440" width="1" height="1"/><rect x="579" y="442" width="1" height="1"/><rect x="581" y="442" width="1" height="1"/><rect x="577" y="444" width="1" height="1"/><rect x="579" y="444" width="1" height="1"/><rect x="581" y="444" width="1" height="1"/><rect x="575" y="446" width="1" height="1"/><rect x="583" y="446" width="1" height="1"/><rect x="587" y="434" width="1" height="1"/><rect x="595" y="434" width="1" height="1"/><rect x="589" y="436" width="1" height="1"/><rect x="591" y="436" width="1" height="1"/><rect x="593" y="436" width="1" height="1"/><rect x="589" y="438" width="1" height="1"/><rect x="591" y="438" width="1" height="1"/><rect x="589" y="440" width="1" height="1"/><rect x="593" y="440" width="1" height="1"/><rect x="591" y="442" width="1" height="1"/><rect x="593" y="442" width="1" height="1"/><rect x="589" y="444" width="1" height="1"/><rect x="591" y="444" width="1" height="1"/><rect x="593" y="444" width="1" height="1"/><rect x="587" y="446" width="1" height="1"/><rect x="595" y="446" width="1" height="1"/><rect x="611" y="434" width="1" height="1"/><rect x="619" y="434" width="1" height="1"/><rect x="613" y="436" width="1" height="1"/><rect x="615" y="436" width="1" height="1"/><rect x="617" y="436" width="1" height="1"/><rect x="613" y="438" width="1" height="1"/><rect x="615" y="438" width="1" height="1"/><rect x="613" y="440" width="1" height="1"/><rect x="617" y="440" width="1" height="1"/><rect x="615" y="442" width="1" height="1"/><rect x="617" y="442" width="1" height="1"/><rect x="613" y="444" width="1" height="1"/><rect x="615" y="444" width="1" height="1"/><rect x="617" y="444" width="1" height="1"/><rect x="611" y="446" width="1" height="1"/><rect x="619" y="446" width="1" height="1"/><rect x="623" y="434" width="1" height="1"/><rect x="631" y="434" width="1" height="1"/><rect x="625" y="436" width="1" height="1"/><rect x="627" y="436" width="1" height="1"/><rect x="629" y="436" width="1" height="1"/><rect x="625" y="438" width="1" height="1"/><rect x="627" y="438" width="1" height="1"/><rect x="625" y="440" width="1" height="1"/><rect x="629" y="440" width="1" height="1"/><rect x="627" y="442" width="1" height="1"/><rect x="629" y="442" width="1" height="1"/><rect x="625" y="444" width="1" height="1"/><rect x="627" y="444" width="1" height="1"/><rect x="629" y="444" width="1" height="1"/><rect x="623" y="446" width="1" height="1"/><rect x="631" y="446" width="1" height="1"/><rect x="647" y="434" width="1" height="1"/><rect x="655" y="434" width="1" height="1"/><rect x="649" y="436" width="1" height="1"/><rect x="651" y="436" width="1" height="1"/><rect x="653" y="436" width="1" height="1"/><rect x="649" y="438" width="1" height="1"/><rect x="651" y="438" width="1" height="1"/><rect x="649" y="440" width="1" height="1"/><rect x="653" y="440" width="1" height="1"/><rect x="651" y="442" width="1" height="1"/><rect x="653" y="442" width="1" height="1"/><rect x="649" y="444" width="1" height="1"/><rect x="651" y="444" width="1" height="1"/><rect x="653" y="444" width="1" height="1"/><rect x="647" y="446" width="1" height="1"/><rect x="655" y="446" width="1" height="1"/><rect x="659" y="434" width="1" height="1"/><rect x="667" y="434" width="1" height="1"/><rect x="661" y="436" width="1" height="1"/><rect x="663" y="436" width="1" height="1"/><rect x="665" y="436" width="1" height="1"/><rect x="661" y="438" width="1" height="1"/><rect x="663" y="438" width="1" height="1"/><rect x="661" y="440" width="1" height="1"/><rect x="665" y="440" width="1" height="1"/><rect x="663" y="442" width="1" height="1"/><rect x="665" y="442" width="1" height="1"/><rect x="661" y="444" width="1" height="1"/><rect x="663" y="444" width="1" height="1"/><rect x="665" y="444" width="1" height="1"/><rect x="659" y="446" width="1" height="1"/><rect x="667" y="446" width="1" height="1"/><rect x="603" y="434" width="1" height="1"/><rect x="603" y="436" width="1" height="1"/><rect x="603" y="440" width="1" height="1"/><rect x="603" y="442" width="1" height="1"/><rect x="603" y="446" width="1" height="1"/><rect x="639" y="434" width="1" height="1"/><rect x="639" y="436" width="1" height="1"/><rect x="639" y="440" width="1" height="1"/><rect x="639" y="442" width="1" height="1"/><rect x="639" y="446" width="1" height="1"/></g></svg>

<!-- ===== right column buttons ===== -->

<!-- right column -->
<div class="a" style="left:684px;top:80px;width:70px;height:405px;background:#5f6e81"></div>
<div class="a" style="left:684px;top:485px;width:70px;height:217px;background:#b4b4b4;border-top:2px solid #9a9a9a"></div>
<div class="a" style="left:686px;top:489px;width:68px;height:213px;border-left:1px solid #d8d8d8;border-top:1px solid #d8d8d8"></div>
<div class="a" style="left:680px;top:79px;width:2px;height:623px;background:#f0f0f0"></div>
<div class="a" style="left:682px;top:79px;width:2px;height:623px;background:#9a9a9a"></div>


<div class="a" style="left:690px;top:97px;width:63px;height:44px;border-radius:3px;background:linear-gradient(#e83434,#fc1c1c 45%,#e80a0a 80%,#d00000);border:1px solid #fff0f0;box-shadow:0 0 0 1px #5a4a50;color:#fff;font-size:13px;text-align:center;line-height:42px">Break All</div>
<div class="a" style="left:708px;top:148px;width:28px;height:9px;background:#8a8a8a;border:1px solid #202020"></div>
<div class="a" style="left:690px;top:181px;width:63px;height:23px;border-radius:3px;background:linear-gradient(#8e8a88,#7a7776 50%,#615e5c);border:1px solid #1a1a1a;box-shadow:0 0 0 1px #f4f4f4;color:#f0f0f0;font-size:12.2px;text-align:center;line-height:21px"><u>S</u>leep</div>
<div class="a" style="left:690px;top:225px;width:63px;height:23px;border-radius:3px;background:linear-gradient(#8e8a88,#7a7776 50%,#615e5c);border:1px solid #1a1a1a;box-shadow:0 0 0 1px #f4f4f4;color:#f0f0f0;font-size:12.2px;text-align:center;line-height:21px">Re<u>c</u>all</div>
<div class="a" style="left:690px;top:346px;width:25px;height:12px;background:#a8a8a8;border:1px solid #202020"></div>
<div class="a" style="left:730px;top:346px;width:25px;height:12px;background:#a8a8a8;border:1px solid #202020"></div>
<div class="t" style="left:692px;top:361px;font-size:13px;color:#111a28">Rd</div>
<div class="t" style="left:732px;top:361px;font-size:13px;color:#111a28">Wrt</div>
<div class="a" style="left:690px;top:383px;width:63px;height:24px;border-radius:3px;background:linear-gradient(#d02020,#a00000 50%,#700000);border:1px solid #f0e0e0;box-shadow:0 0 0 1px #301010;color:#fff;font-size:12.2px;text-align:center;line-height:22px">Passp</div>
<div class="a" style="left:690px;top:429px;width:63px;height:24px;border-radius:3px;background:linear-gradient(#2828d0,#0000a8 50%,#000070);border:1px solid #e0e0f0;box-shadow:0 0 0 1px #101030;color:#fff;font-size:12.2px;text-align:center;line-height:22px"><u>P</u>ower</div>
<div class="cb" style="left:689px;top:496px;width:13px;height:12px"></div>
<div class="t" style="left:707px;top:495px;font-size:13px;font-weight:bold;color:#10106c">sound</div>
<div class="t" style="left:690px;top:660px;font-size:10.5px;color:#111">API number</div>
<div class="a" style="left:689px;top:674px;width:66px;height:22px;background:#fff;border:1px solid #c8c8c8"></div>
<div class="a" style="left:689px;top:674px;width:14px;height:22px;background:#f0f0f0;border:1px solid #c8c8c8"></div>
<div class="a" style="left:742px;top:674px;width:14px;height:22px;background:#f0f0f0;border:1px solid #c8c8c8"></div>
<div class="t" style="left:692px;top:677px;font-size:15px;color:#8a8a8a">&#8722;</div>
<div class="t" style="left:717px;top:677px;font-size:15px;font-weight:bold;color:#101070">0</div>
<div class="t" style="left:745px;top:677px;font-size:15px;color:#8a8a8a">+</div>
<div class="a" style="left:754px;top:0;width:6px;height:709px;background:#050505"></div>
<svg class="a" style="left:455px;top:630px" width="260" height="55">
<defs><linearGradient id="wg" x1="0" y1="0" x2="0" y2="1"><stop offset="0" stop-color="#d4e8f0"/><stop offset="0.58" stop-color="#bcdae8"/><stop offset="0.64" stop-color="#88bcda"/><stop offset="1" stop-color="#78b0d0"/></linearGradient></defs>
<text x="6" y="46" font-family="Liberation Sans" font-weight="bold" font-size="48" letter-spacing="2" fill="url(#wg)" stroke="url(#wg)" stroke-width="3" stroke-linejoin="miter" fill-opacity="0.9" stroke-opacity="0.9">tehnari.ru</text>
</svg>

<div class="a" style="left:0;top:702px;width:760px;height:7px;background:linear-gradient(90deg,#141010,#2a2a2a 15%,#1a1a1a 30%,#303030 50%,#1c1c1c 70%,#262626 85%,#101010)"></div>
</body></html>
